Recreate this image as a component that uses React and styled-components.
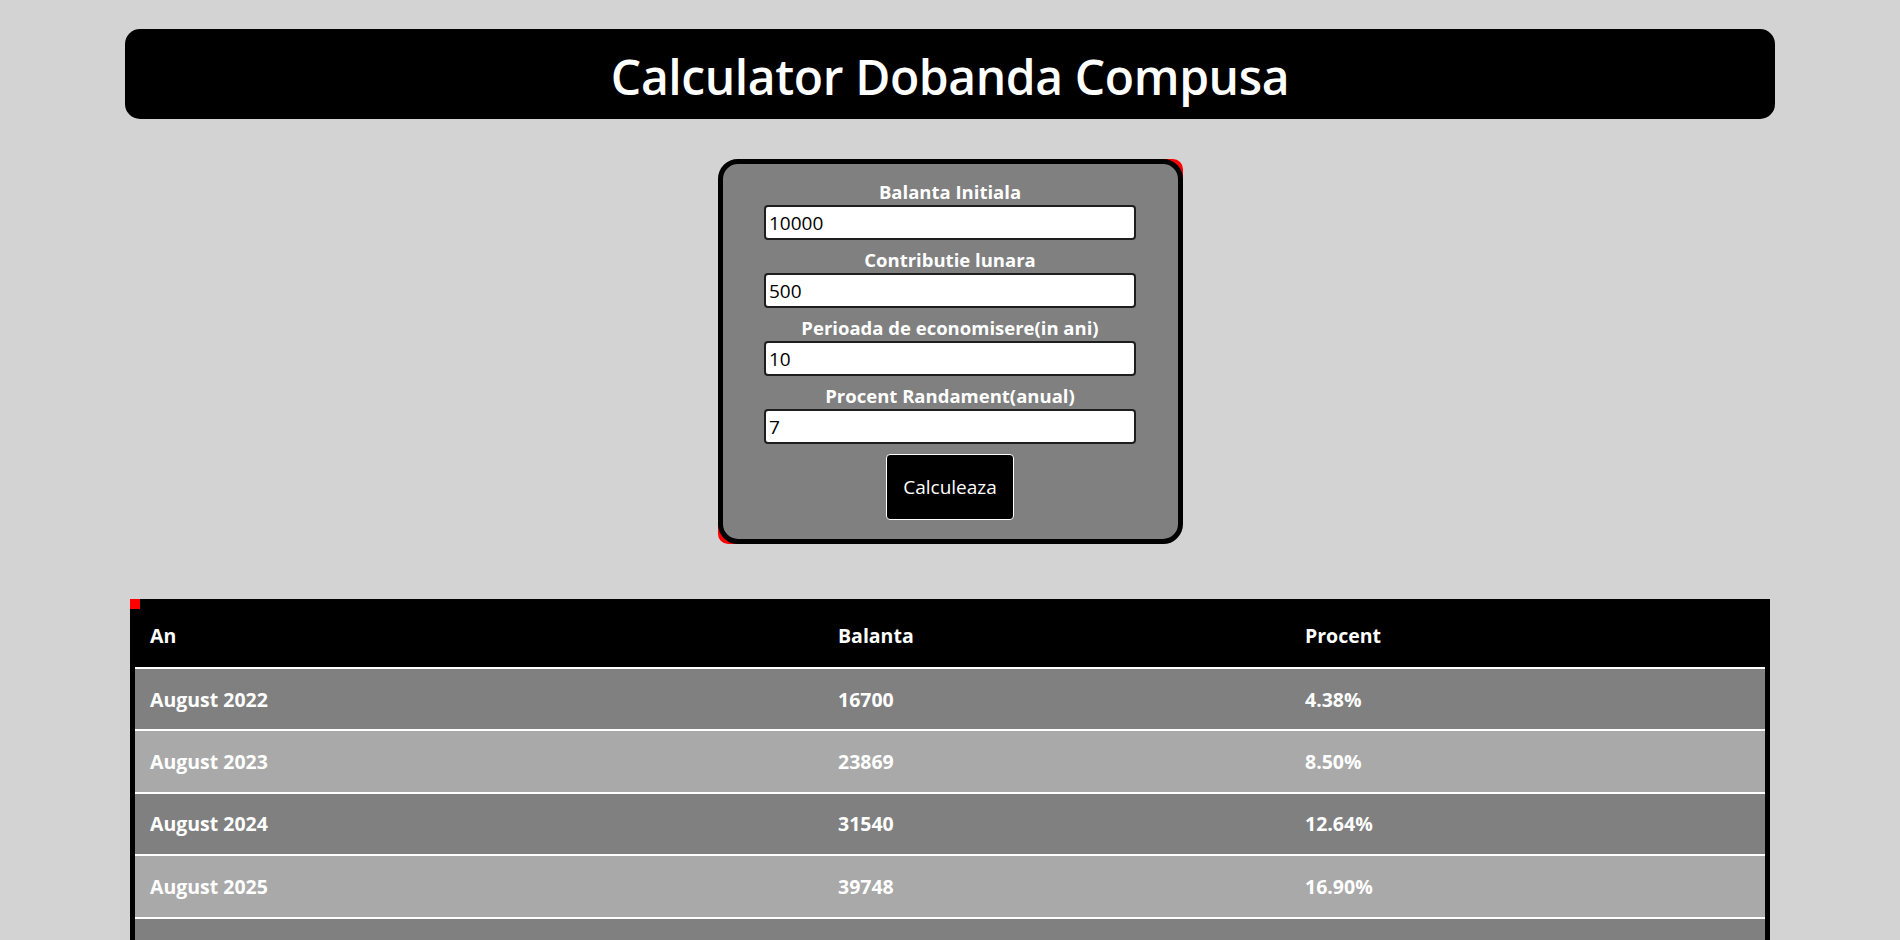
import React, { useState } from 'react'
import styled, { createGlobalStyle } from 'styled-components'

const GlobalStyle = createGlobalStyle`
  body {
    margin: 8px;
    background: #d3d3d3;
    font-family: "Open Sans", "Noto Sans", sans-serif;
  }
`

const Header = styled.div`
  width: 1650px;
  height: 90px;
  margin: 21px auto 0;
  background: #000;
  border-radius: 15px;
  display: flex;
  align-items: center;
  justify-content: center;
`

const Title = styled.h1`
  margin: 0;
  padding-top: 4px;
  color: #fff;
  font-size: 48px;
  font-weight: 600;
  letter-spacing: -0.4px;
`

const PanelFrame = styled.div`
  width: 465px;
  margin: 40px auto 0;
  border-radius: 10px;
  background: linear-gradient(
    to top right,
    red 0 10%,
    transparent 10% 90%,
    red 90%
  );
`

const Panel = styled.form`
  box-sizing: border-box;
  border: 5px solid #000;
  border-radius: 20px;
  background: #808080;
  padding: 13px 0 19px;
  display: flex;
  flex-direction: column;
  align-items: center;
`

const Label = styled.label`
  color: #fff;
  font-weight: 700;
  font-size: 18.5px;
  line-height: 22px;
  margin-top: ${(p) => (p.first ? '4px' : '9px')};
  margin-bottom: 2px;
`

const Input = styled.input`
  box-sizing: border-box;
  width: 372px;
  height: 35px;
  border: 2px solid #1e1e1e;
  border-radius: 4px;
  padding: 0 3px;
  font-family: inherit;
  font-size: 19px;
  color: #000;
  background: #fff;
`

const Button = styled.button`
  margin-top: 10px;
  width: 128px;
  height: 66px;
  background: #000;
  color: #fff;
  border: 1px solid #fff;
  border-radius: 4px;
  font-family: inherit;
  font-size: 19px;
`

const Table = styled.table`
  width: 1640px;
  margin: 55px auto 0;
  border-collapse: separate;
  border-spacing: 0;
  border: 5px solid transparent;
  border-bottom: none;
  background: linear-gradient(red, red) 0 0 / 10px 10px no-repeat, #000;
  background-origin: border-box;
  color: #fff;
  font-size: 19.5px;
  font-weight: 700;
`

const Th = styled.th`
  height: 63px;
  padding: 0 15px;
  text-align: left;
  border-bottom: 2.5px solid #fff;
  background: ${(p) =>
    p.corner
      ? 'linear-gradient(red, red) 0 0 / 5px 5px no-repeat, #000'
      : '#000'};
  width: ${(p) => p.w || 'auto'};
`

const Row = styled.tr`
  background: ${(p) => (p.odd ? '#a9a9a9' : '#808080')};
`

const Td = styled.td`
  height: 60.4px;
  padding: 0 15px;
  border-bottom: 2px solid #fff;
`

const buildRows = (initial, monthly, years, rate) => {
  const rows = []
  let balance = initial
  for (let i = 1; i <= years; i++) {
    balance = balance * (1 + rate / 100) + monthly * 12
    const invested = initial + monthly * 12 * i
    rows.push({
      year: `August ${2021 + i}`,
      balance: Math.round(balance),
      percent: (((balance - invested) / invested) * 100).toFixed(2) + '%',
    })
  }
  return rows
}

const App = () => {
  const [initial, setInitial] = useState('10000')
  const [monthly, setMonthly] = useState('500')
  const [years, setYears] = useState('10')
  const [rate, setRate] = useState('7')
  const rows = buildRows(10000, 500, 10, 7)

  return (
    <>
      <GlobalStyle />
      <Header>
        <Title>Calculator Dobanda Compusa</Title>
      </Header>
      <PanelFrame>
        <Panel onSubmit={(e) => e.preventDefault()}>
          <Label first>Balanta Initiala</Label>
          <Input value={initial} onChange={(e) => setInitial(e.target.value)} />
          <Label>Contributie lunara</Label>
          <Input value={monthly} onChange={(e) => setMonthly(e.target.value)} />
          <Label>Perioada de economisere(in ani)</Label>
          <Input value={years} onChange={(e) => setYears(e.target.value)} />
          <Label>Procent Randament(anual)</Label>
          <Input value={rate} onChange={(e) => setRate(e.target.value)} />
          <Button type="submit">Calculeaza</Button>
        </Panel>
      </PanelFrame>
      <Table>
        <thead>
          <tr>
            <Th corner w="658px">An</Th>
            <Th w="437px">Balanta</Th>
            <Th>Procent</Th>
          </tr>
        </thead>
        <tbody>
          {rows.map((r, i) => (
            <Row key={r.year} odd={i % 2 === 1}>
              <Td>{r.year}</Td>
              <Td>{r.balance}</Td>
              <Td>{r.percent}</Td>
            </Row>
          ))}
        </tbody>
      </Table>
    </>
  )
}

export default App
